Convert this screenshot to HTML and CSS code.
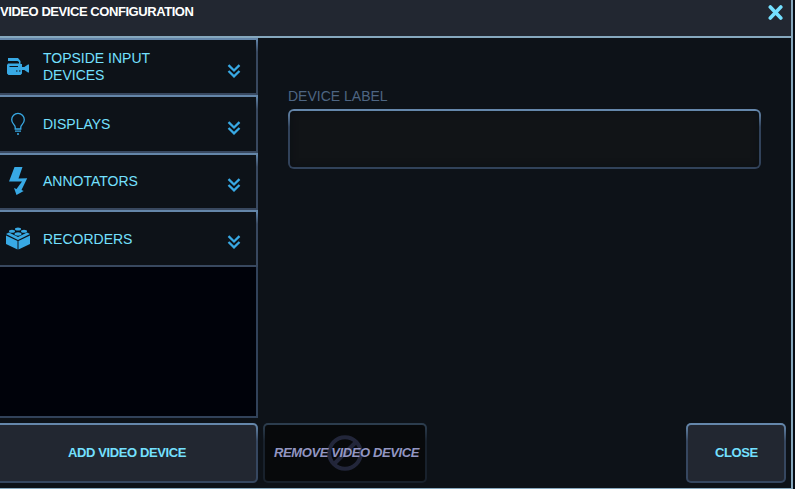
FILE: index.html
```
<!DOCTYPE html>
<html lang="en">
<head>
<meta charset="utf-8">
<title>Video Device Configuration</title>
<link rel="stylesheet" href="styles.css">
</head>
<body>
<svg width="0" height="0" class="defs">
  <symbol id="chevrons" viewBox="0 0 14 14"><path d="M1.500 1.200 7 6.500l5.500-5.300M1.500 7 7 12.300l5.500-5.300" fill="none" stroke="currentColor" stroke-width="2.300"/></symbol>
</svg>
<main class="dialog">
  <header class="titlebar">
    <h1>VIDEO DEVICE CONFIGURATION</h1>
    <button class="dismiss" aria-label="Close"><svg width="15" height="15" viewBox="0 0 15 15"><path d="M2.300 2l10.500 11M12.800 2 2.300 13" stroke="currentColor" stroke-width="3.600" stroke-linecap="round"/></svg></button>
  </header>
  <div class="content">
    <nav class="devices">
      <div class="item">
        <svg class="icon" width="24" height="24" viewBox="0 0 24 24" fill="currentColor"><path d="M2 3h10l2.500 3v3H16v3h2.300L22 9.500h1v8h-1L18.300 15H16v3.500L14.500 20H2.500L1 18.500V10l1-1.500h11V7l-1.500-1H2z"/><path d="M3.500 11.500H12M10 16h1.500M13 16h1.500" stroke="#0d1218" stroke-width="1.200"/></svg>
        <span>TOPSIDE INPUT DEVICES</span><svg class="chev" width="14" height="14"><use href="#chevrons"/></svg>
      </div>
      <div class="item low">
        <svg class="icon" width="24" height="24" viewBox="0 0 24 24" fill="none" stroke="currentColor" stroke-width="1.300"><path d="M9.200 17v-2c0-2-3.500-3.200-3.500-7.300a6.300 6.300 0 0 1 12.600 0c0 4.100-3.500 5.300-3.500 7.300v2zM9 19.200h6M11 22h2"/></svg>
        <span>DISPLAYS</span><svg class="chev" width="14" height="14"><use href="#chevrons"/></svg>
      </div>
      <div class="item">
        <svg class="icon" width="24" height="30" viewBox="0 0 24 30" fill="currentColor"><path d="M8.500 1h8l-4 11.500 8.700-.3L15.500 24l2.200 1-7.200 4-2.500-7 2.500 1L16 15.500H3z"/></svg>
        <span>ANNOTATORS</span><svg class="chev" width="14" height="14"><use href="#chevrons"/></svg>
      </div>
      <div class="item low">
        <svg class="icon" width="24" height="24" viewBox="0 0 24 24" fill="currentColor"><path d="M0 9.500 11.500 15v8.500L0 18zM12.500 15 24 9.500V18l-11.500 5.500z"/><path d="m0 8 3-1.500L12 11l9-4.500L24 8l-12 6z"/><ellipse cx="12" cy="3" rx="3" ry="1.500"/><ellipse cx="6" cy="5.300" rx="3" ry="1.500"/><ellipse cx="18" cy="5.300" rx="3" ry="1.500"/><ellipse cx="12" cy="8" rx="3.500" ry="1.700"/></svg>
        <span>RECORDERS</span><svg class="chev" width="14" height="14"><use href="#chevrons"/></svg>
      </div>
    </nav>
    <section class="details">
      <label for="device-label">DEVICE LABEL</label>
      <input id="device-label" type="text">
    </section>
  </div>
  <footer class="actions">
    <button class="btn add">ADD VIDEO DEVICE</button>
    <button class="btn remove" disabled><svg class="prohibit" width="36" height="36" viewBox="0 0 36 36" fill="none" stroke="#22263a" stroke-width="4"><circle cx="18" cy="18" r="15.800"/><path d="M7 29 29 7"/></svg><span>REMOVE VIDEO DEVICE</span></button>
    <button class="btn close">CLOSE</button>
  </footer>
</main>
</body>
</html>
```
FILE: styles.css
```
* { box-sizing: border-box; }
body {
  margin: 0;
  background: #070b12;
  font: 14px/17px "Liberation Sans", Arial, sans-serif;
  overflow: hidden;
}
.defs { position: absolute; }
.dialog {
  width: 793px;
  height: 489px;
  display: flex;
  flex-direction: column;
  background: #0d1218;
  border-right: 2px solid #86a8be;
  border-bottom: 1px solid #86a8be;
}
.titlebar {
  height: 38px;
  display: flex;
  justify-content: space-between;
  align-items: flex-start;
  background: #222731;
  border-bottom: 2px solid #86a8be;
}
h1 {
  margin: 3px 0 0;
  font-size: 13px;
  line-height: 17px;
  letter-spacing: -0.44px;
  color: #fff;
}
.dismiss {
  margin: 5px 8px 0 0;
  padding: 0;
  height: 15px;
  border: 0;
  background: none;
  color: #74e0ff;
}
.dismiss svg { display: block; }
.content { height: 380px; display: flex; }
.devices {
  width: 258px;
  background: #00020a;
  border-right: 2px solid #31425a;
  border-bottom: 2px solid #31425a;
}
.item {
  height: 57.25px;
  margin-right: -2px;
  padding: 0 16px 0 6px;
  display: flex;
  align-items: center;
  background: #0d1218;
  border: 2px solid #38485f;
  border-left: 0;
  border-image: linear-gradient(#6486a9 2px, #58779a 4px, #38485f 14px) 2 2 2 0;
  color: #38a9e4;
}
.icon { flex: none; }
.item span {
  width: 130px;
  margin-left: 13px;
  color: #74e0ff;
}
.low span { padding-top: 2px; }
.chev { margin: 8px -1px 0 auto; }
.details { padding: 50px 30px 0; }
.details label {
  display: block;
  margin-bottom: 4px;
  color: #4e6582;
}
.details input {
  display: block;
  width: 473px;
  height: 60px;
  padding: 0 12px;
  border: 2px solid transparent;
  border-radius: 6px;
  background: linear-gradient(#111417, #111417) padding-box, linear-gradient(#6587ab 2px, #31425a 18px) border-box;
  color: #74e0ff;
  font: inherit;
  box-shadow: inset 0 0 7px #0b0f14;
}
.actions {
  display: flex;
  height: 70px;
  padding: 5px 5px 0 0;
}
.btn {
  height: 60px;
  padding: 0 0 2px 1px;
  border: 2px solid transparent;
  border-radius: 5px;
  background: linear-gradient(#222731, #222731) padding-box, linear-gradient(#6587ab 2px, #364760 18px) border-box;
  color: #74e0ff;
  font: bold 13px/17px "Liberation Sans", Arial, sans-serif;
  letter-spacing: -0.4px;
}
.add {
  width: 258px;
  padding-right: 3px;
  border-left: 0;
  border-radius: 0 5px 5px 0;
}
.remove {
  position: relative;
  width: 164px;
  margin-left: 5px;
  background: linear-gradient(#07090b, #07090b) padding-box, linear-gradient(#2c3d4e 2px, #18212c 18px) border-box;
  color: #9296c2;
  font-style: italic;
}
.remove span { position: relative; left: 1px; }
.prohibit {
  position: absolute;
  left: 62px;
  top: 10px;
}
.close { width: 100px; margin-left: auto; }
```
